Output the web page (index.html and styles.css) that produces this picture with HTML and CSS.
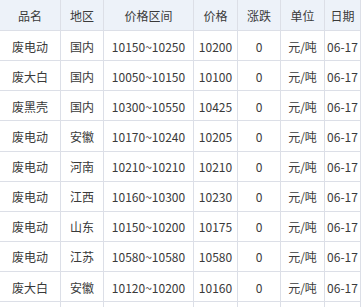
FILE: index.html
```html
<!DOCTYPE html>
<html lang="zh">
<head>
<meta charset="utf-8">
<link rel="stylesheet" href="styles.css">
</head>
<body>
<div class="table">
  <div class="row head">
    <div class="c">品名</div><div class="c">地区</div><div class="c">价格区间</div><div class="c">价格</div><div class="c">涨跌</div><div class="c">单位</div><div class="c">日期</div>
  </div>
  <div class="row"><div class="c">废电动</div><div class="c">国内</div><div class="c">10150~10250</div><div class="c">10200</div><div class="c">0</div><div class="c">元/吨</div><div class="c">06-17</div></div>
  <div class="row"><div class="c">废大白</div><div class="c">国内</div><div class="c">10050~10150</div><div class="c">10100</div><div class="c">0</div><div class="c">元/吨</div><div class="c">06-17</div></div>
  <div class="row"><div class="c">废黑壳</div><div class="c">国内</div><div class="c">10300~10550</div><div class="c">10425</div><div class="c">0</div><div class="c">元/吨</div><div class="c">06-17</div></div>
  <div class="row"><div class="c">废电动</div><div class="c">安徽</div><div class="c">10170~10240</div><div class="c">10205</div><div class="c">0</div><div class="c">元/吨</div><div class="c">06-17</div></div>
  <div class="row"><div class="c">废电动</div><div class="c">河南</div><div class="c">10210~10210</div><div class="c">10210</div><div class="c">0</div><div class="c">元/吨</div><div class="c">06-17</div></div>
  <div class="row"><div class="c">废电动</div><div class="c">江西</div><div class="c">10160~10300</div><div class="c">10230</div><div class="c">0</div><div class="c">元/吨</div><div class="c">06-17</div></div>
  <div class="row"><div class="c">废电动</div><div class="c">山东</div><div class="c">10150~10200</div><div class="c">10175</div><div class="c">0</div><div class="c">元/吨</div><div class="c">06-17</div></div>
  <div class="row"><div class="c">废电动</div><div class="c">江苏</div><div class="c">10580~10580</div><div class="c">10580</div><div class="c">0</div><div class="c">元/吨</div><div class="c">06-17</div></div>
  <div class="row"><div class="c">废大白</div><div class="c">安徽</div><div class="c">10120~10200</div><div class="c">10160</div><div class="c">0</div><div class="c">元/吨</div><div class="c">06-17</div></div>
  <div class="row tail"><div class="c"></div><div class="c"></div><div class="c"></div><div class="c"></div><div class="c"></div><div class="c"></div><div class="c"></div></div>
</div>
</body>
</html>
```
FILE: styles.css
```css
html, body {
  margin: 0;
  padding: 0;
  background: #ffffff;
  overflow: hidden;
  height: 308px;
}
.table {
  width: 361px;
  font-family: "Noto Sans CJK SC", "Noto Sans", sans-serif;
  font-size: 12px;
  color: #3a3a3a;
}
.row {
  display: grid;
  grid-template-columns: 61px 43px 90px 44px 43px 44px 36px;
  height: 30.125px;
}
.row.head {
  height: 31px;
  background: #edf2f9;
}
.row.tail {
  height: 5px;
}
.row.tail .c {
  border-bottom: none;
}
.c {
  box-sizing: border-box;
  border-right: 1px solid #dcdfe7;
  border-bottom: 1px solid #dcdfe7;
  display: flex;
  align-items: center;
  justify-content: center;
  white-space: nowrap;
  overflow: visible;
  padding-top: 1px;
}
```
